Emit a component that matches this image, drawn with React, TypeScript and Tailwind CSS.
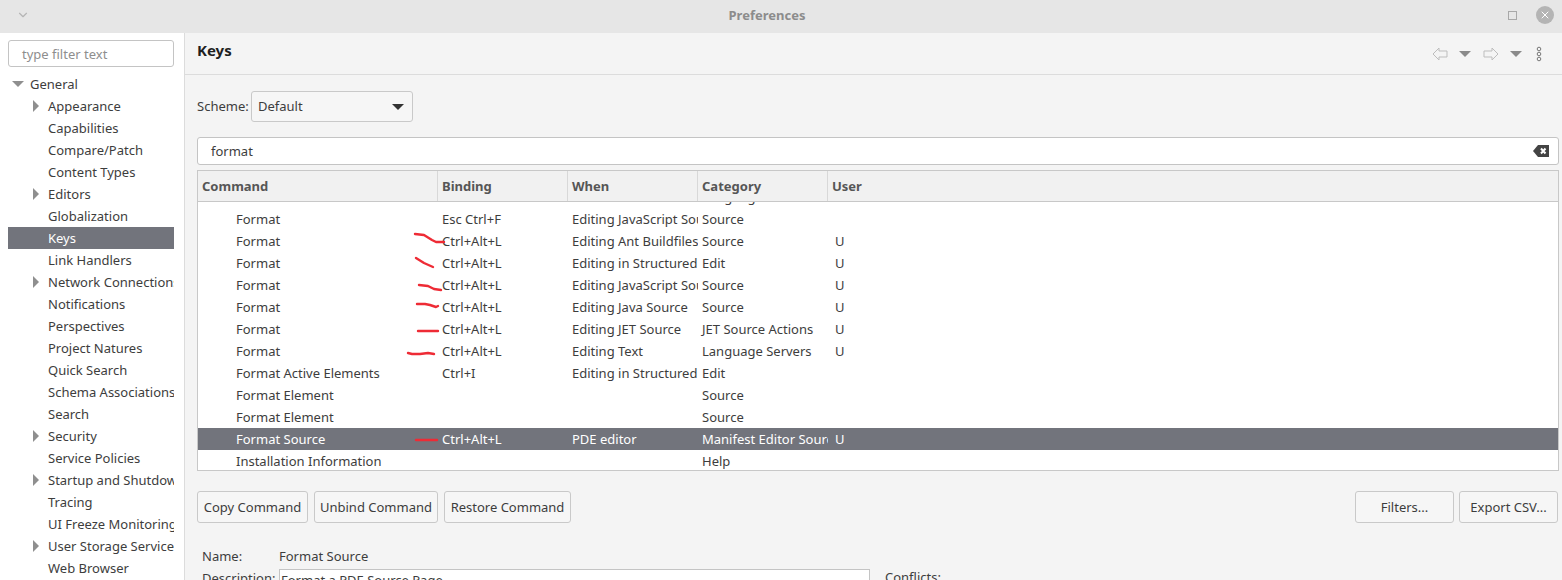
import { ChevronDown, X } from 'lucide-react';

const font = 'font-["Noto_Sans","Open_Sans",sans-serif]';

const tree = [
  { label: 'Appearance', arrow: true },
  { label: 'Capabilities' },
  { label: 'Compare/Patch' },
  { label: 'Content Types' },
  { label: 'Editors', arrow: true },
  { label: 'Globalization' },
  { label: 'Keys', selected: true },
  { label: 'Link Handlers' },
  { label: 'Network Connections', arrow: true },
  { label: 'Notifications' },
  { label: 'Perspectives' },
  { label: 'Project Natures' },
  { label: 'Quick Search' },
  { label: 'Schema Associations' },
  { label: 'Search' },
  { label: 'Security', arrow: true },
  { label: 'Service Policies' },
  { label: 'Startup and Shutdown', arrow: true },
  { label: 'Tracing' },
  { label: 'UI Freeze Monitoring' },
  { label: 'User Storage Service', arrow: true },
  { label: 'Web Browser' },
];

type Row = {
  command: string;
  binding?: string;
  when?: string;
  category?: string;
  user?: string;
  mark?: string;
  selected?: boolean;
};

const rows: Row[] = [
  { command: 'Format', category: 'Language Servers' },
  { command: 'Format', binding: 'Esc Ctrl+F', when: 'Editing JavaScript Source', category: 'Source' },
  { command: 'Format', binding: 'Ctrl+Alt+L', when: 'Editing Ant Buildfiles', category: 'Source', user: 'U', mark: 'M17 4 L26 5 L34 10 L38 12 L46 12' },
  { command: 'Format', binding: 'Ctrl+Alt+L', when: 'Editing in Structured Text', category: 'Edit', user: 'U', mark: 'M18 6 L26 11 L35 15' },
  { command: 'Format', binding: 'Ctrl+Alt+L', when: 'Editing JavaScript Source', category: 'Source', user: 'U', mark: 'M21 11 L30 12 L36 15 L43 16' },
  { command: 'Format', binding: 'Ctrl+Alt+L', when: 'Editing Java Source', category: 'Source', user: 'U', mark: 'M19 8 L27 8 L32 9 L38 11 L40 10' },
  { command: 'Format', binding: 'Ctrl+Alt+L', when: 'Editing JET Source', category: 'JET Source Actions', user: 'U', mark: 'M20 13 L40 13' },
  { command: 'Format', binding: 'Ctrl+Alt+L', when: 'Editing Text', category: 'Language Servers', user: 'U', mark: 'M10 13 L14 14 L22 14 L30 13 L36 14' },
  { command: 'Format Active Elements', binding: 'Ctrl+I', when: 'Editing in Structured Text', category: 'Edit' },
  { command: 'Format Element', category: 'Source' },
  { command: 'Format Element', category: 'Source' },
  { command: 'Format Source', binding: 'Ctrl+Alt+L', when: 'PDE editor', category: 'Manifest Editor Source', user: 'U', mark: 'M18 12 L39 12', selected: true },
  { command: 'Installation Information', category: 'Help' },
];

function Arrow() {
  return (
    <svg width="8" height="14" viewBox="0 0 8 14" className="shrink-0">
      <path d="M1 1 L7 7 L1 13 Z" fill="#8f8f8f" />
    </svg>
  );
}

function Tree() {
  return (
    <aside className="w-[185px] shrink-0 bg-white border-r border-[#dcdcdc] pl-2 pr-[10px] pt-[7px]">
      <div className="h-[27px] border border-[#c4c4c4] rounded-[3px] pl-[13px] pt-[2px] flex items-center text-[#8e8e8e]">
        type filter text
      </div>
      <div className="mt-[6px] h-[22px] pt-[2px] flex items-center pl-1 gap-[6px]">
        <svg width="12" height="8" viewBox="0 0 12 8" className="shrink-0 -mt-[2px]">
          <path d="M0 1 L12 1 L6 7 Z" fill="#8f8f8f" />
        </svg>
        <span>General</span>
      </div>
      {tree.map((item) => (
        <div
          key={item.label}
          className={`h-[22px] pt-[2px] flex items-center overflow-hidden whitespace-nowrap pl-[40px] relative ${
            item.selected ? 'bg-[#72747c] text-white' : ''
          }`}
        >
          {item.arrow && (
            <span className="absolute left-[24px] top-1">
              <Arrow />
            </span>
          )}
          {item.label}
        </div>
      ))}
    </aside>
  );
}

function Header({ label, width }: { label: string; width: string }) {
  return (
    <div className={`${width} shrink-0 h-full border-r border-[#d8d8d8] pl-1 pt-[2px] flex items-center font-bold text-[#565656]`}>
      {label}
    </div>
  );
}

function TableRow({ row }: { row: Row }) {
  return (
    <div className={`relative flex h-[22px] pt-[2px] items-center whitespace-nowrap ${row.selected ? 'bg-[#72747c] text-white' : ''}`}>
      <div className="w-[240px] shrink-0 pl-[38px] overflow-hidden">{row.command}</div>
      <div className="w-[130px] shrink-0 pl-1 overflow-hidden">{row.binding}</div>
      <div className="w-[130px] shrink-0 pl-1 overflow-hidden">{row.when}</div>
      <div className="w-[130px] shrink-0 pl-1 overflow-hidden">{row.category}</div>
      <div className="pl-[7px]">{row.user}</div>
      {row.mark && (
        <svg width="60" height="22" viewBox="0 0 60 22" className="absolute left-[200px] top-0">
          <path d={row.mark} fill="none" stroke="#ee2b35" strokeWidth="2.4" strokeLinecap="round" strokeLinejoin="round" />
        </svg>
      )}
    </div>
  );
}

function Btn({ label, width }: { label: string; width: string }) {
  return (
    <div className={`${width} h-8 pt-[2px] flex items-center justify-center bg-[#f6f6f6] border border-[#c9c9c9] rounded-[3px]`}>
      {label}
    </div>
  );
}

export default function App() {
  return (
    <div className={`${font} h-[580px] w-[1562px] overflow-hidden flex flex-col bg-[#f4f4f4] text-[13px] text-[#3d3d3d]`}>
      <div className="h-[33px] shrink-0 bg-[#e6e6e6] flex items-center px-4 pb-[3px]">
        <ChevronDown size={14} className="text-[#b5b5b5]" />
        <div className="flex-1 text-center font-bold text-[#8c8c8c] pr-[4px] pt-[2px]">Preferences</div>
        <div className="w-[9px] h-[9px] border border-[#a8a8a8] mr-[19px]" />
        <div className="w-[18px] h-[18px] rounded-full bg-[#b4b4b4] flex items-center justify-center mr-[-8px]">
          <X size={12} className="text-white" />
        </div>
      </div>

      <div className="flex flex-1 min-h-0">
        <Tree />

        <main className="flex-1 min-w-0">
          <div className="h-[42px] border-b border-[#dcdcdc] pl-3 pr-[20px] flex items-center justify-between">
            <div className="font-bold text-[15px] text-[#1f1f1f] mb-[6px]">Keys</div>
            <div className="flex items-center">
              <svg width="16" height="14" viewBox="0 0 16 14">
                <path d="M7 1 L1 7 L7 13 L7 10 L15 10 L15 4 L7 4 Z" fill="none" stroke="#bdbdbd" />
              </svg>
              <svg width="12" height="6" viewBox="0 0 12 6" className="ml-[11px]">
                <path d="M0 0 L12 0 L6 6 Z" fill="#8a8a8a" />
              </svg>
              <svg width="16" height="14" viewBox="0 0 16 14" className="ml-[12px]">
                <path d="M9 1 L15 7 L9 13 L9 10 L1 10 L1 4 L9 4 Z" fill="none" stroke="#bdbdbd" />
              </svg>
              <svg width="12" height="6" viewBox="0 0 12 6" className="ml-[11px]">
                <path d="M0 0 L12 0 L6 6 Z" fill="#8a8a8a" />
              </svg>
              <svg width="6" height="16" viewBox="0 0 6 16" className="ml-[14px]">
                <circle cx="3" cy="3" r="1.8" fill="none" stroke="#777" />
                <circle cx="3" cy="8" r="1.8" fill="none" stroke="#777" />
                <circle cx="3" cy="13" r="1.8" fill="none" stroke="#777" />
              </svg>
            </div>
          </div>

          <div className="pl-3 pr-[3px]">
            <div className="mt-4 flex items-center">
              <span className="w-[54px]">Scheme:</span>
              <div className="w-[162px] h-[31px] bg-[#f6f6f6] border border-[#c9c9c9] rounded-[3px] pl-[6px] pr-2 flex items-center justify-between">
                <span>Default</span>
                <svg width="12" height="6" viewBox="0 0 12 6" className="-ml-[1px]">
                  <path d="M0 0 L12 0 L6 6 Z" fill="#333" />
                </svg>
              </div>
            </div>

            <div className="mt-[15px] h-[28px] bg-white border border-[#c4c4c4] rounded-[3px] pl-[13px] pr-[9px] flex items-center justify-between">
              <span className="pt-[2px]">format</span>
              <svg width="16" height="12" viewBox="0 0 16 12">
                <path d="M5 0 H16 V12 H5 L0 6 Z" fill="#444" />
                <path d="M8 3.5 L12.5 8.5 M12.5 3.5 L8 8.5" stroke="#fff" strokeWidth="2" />
              </svg>
            </div>

            <div className="mt-[5px] h-[301px] bg-white border border-[#c8c8c8] flex flex-col">
              <div className="h-[31px] shrink-0 flex bg-[#f1f1f1] border-b border-[#c8c8c8]">
                <Header label="Command" width="w-[240px]" />
                <Header label="Binding" width="w-[130px]" />
                <Header label="When" width="w-[130px]" />
                <Header label="Category" width="w-[130px]" />
                <div className="pl-1 pt-[2px] flex items-center font-bold text-[#565656]">User</div>
              </div>
              <div className="flex-1 min-h-0 overflow-hidden">
                <div className="-mt-[16px]">
                  {rows.map((row, i) => (
                    <TableRow key={i} row={row} />
                  ))}
                </div>
              </div>
            </div>

            <div className="mt-5 flex items-center">
              <div className="flex gap-[6px]">
                <Btn label="Copy Command" width="w-[111px]" />
                <Btn label="Unbind Command" width="w-[124px]" />
                <Btn label="Restore Command" width="w-[127px]" />
              </div>
              <div className="ml-auto flex gap-[5px] mr-[1px]">
                <Btn label="Filters..." width="w-[99px]" />
                <Btn label="Export CSV..." width="w-[99px]" />
              </div>
            </div>

            <div className="mt-[25px] pl-[5px] flex h-[18px] items-center">
              <span className="w-[77px]">Name:</span>
              <span>Format Source</span>
            </div>
            <div className="mt-[3px] pl-[5px] flex">
              <span className="w-[77px]">Description:</span>
              <div className="w-[591px] h-[40px] bg-white border border-[#c4c4c4] pl-[1px] pt-[1px]">Format a PDE Source Page</div>
              <span className="ml-[15px] -mt-[1px]">Conflicts:</span>
            </div>
          </div>
        </main>
      </div>
    </div>
  );
}
